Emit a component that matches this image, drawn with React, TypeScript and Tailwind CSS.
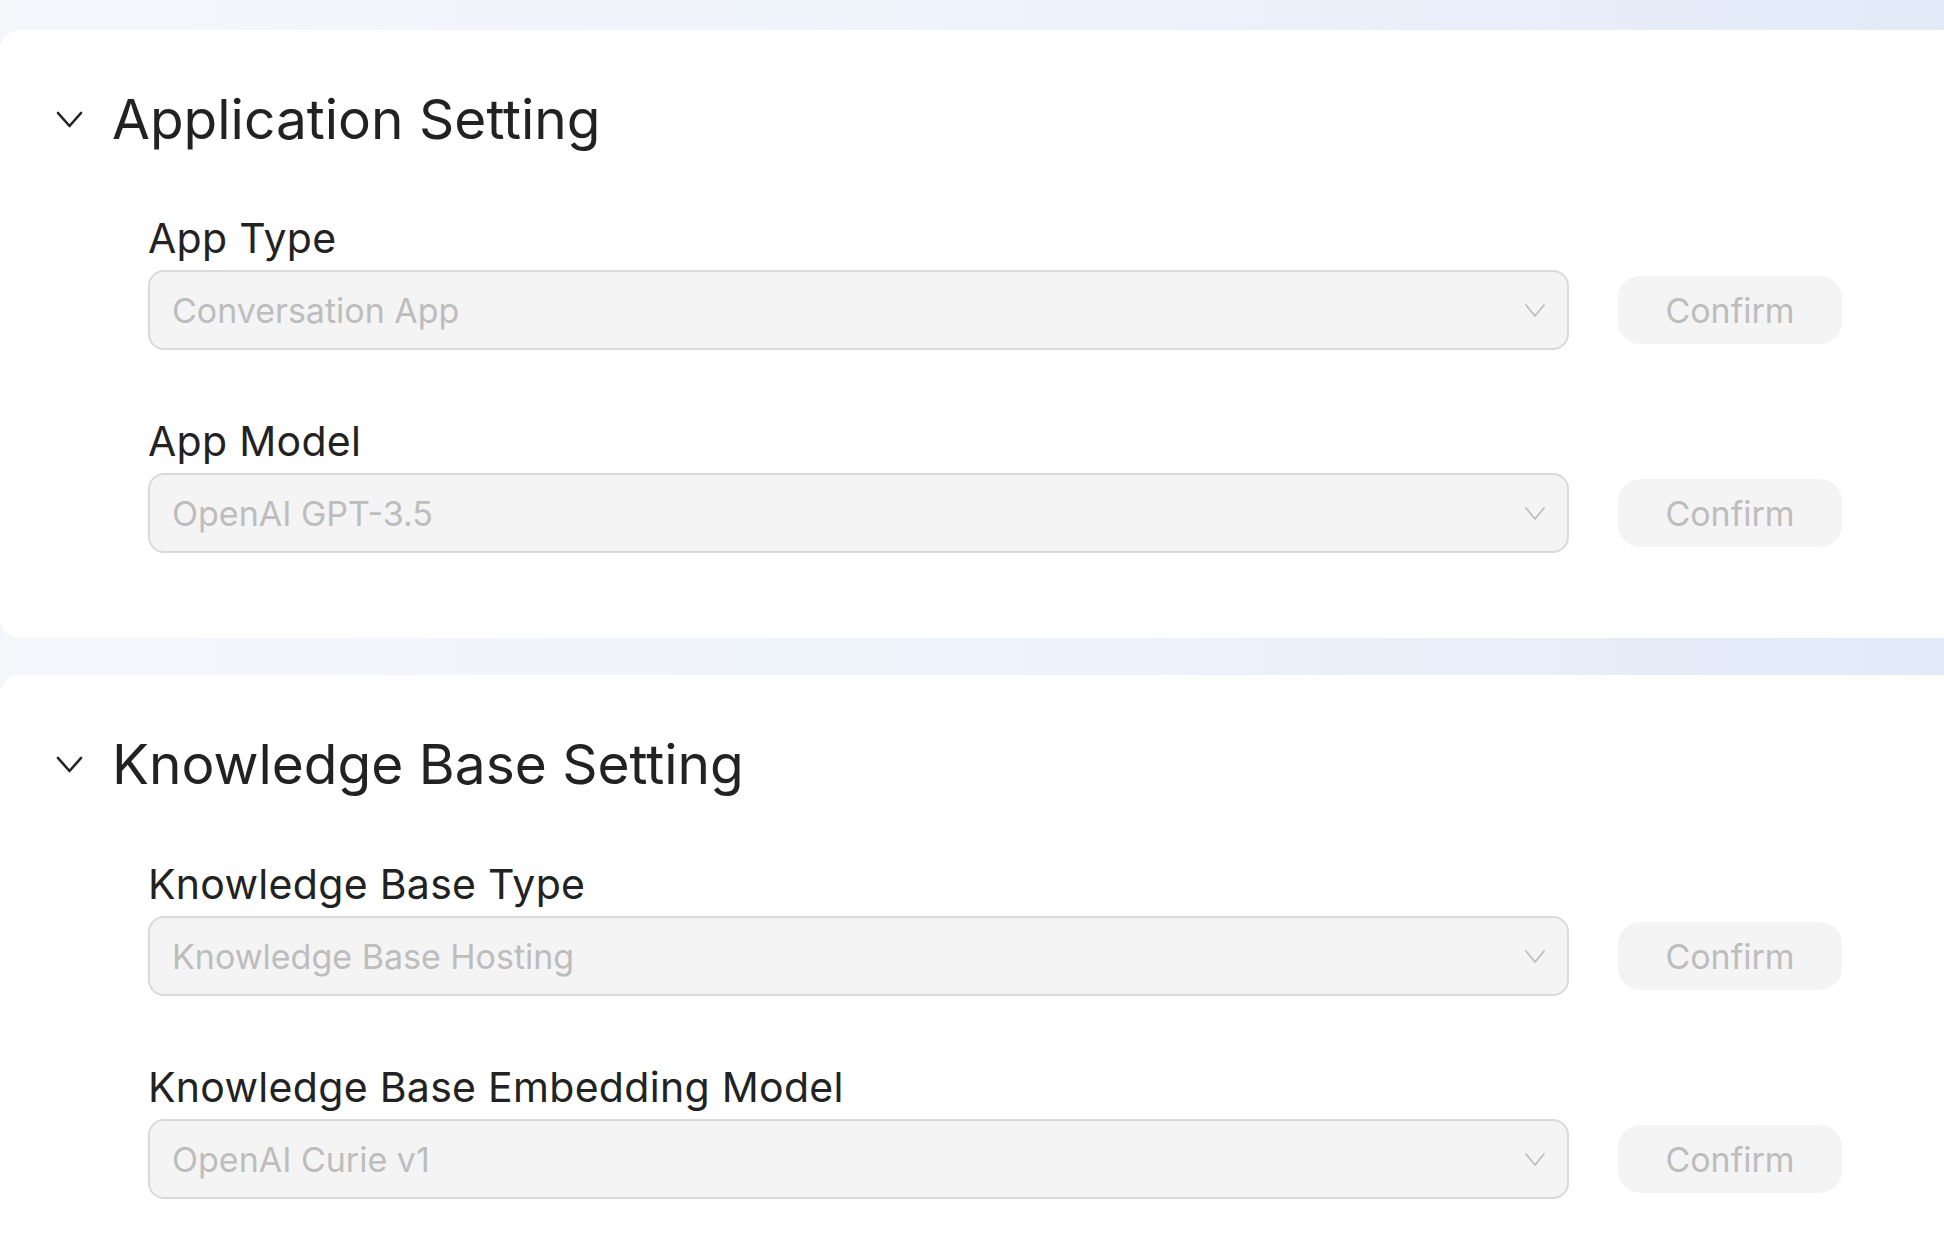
import React from "react";

const font = { fontFamily: "Inter, 'Open Sans', sans-serif" };

function Chevron({ className }: { className?: string }) {
  return (
    <svg viewBox="0 0 29 22" className={className} fill="none" stroke="currentColor" strokeWidth="2.6" strokeLinecap="round" strokeLinejoin="round">
      <path d="M3 5 L14.5 18 L26 5" />
    </svg>
  );
}

function SmallChevron() {
  return (
    <svg viewBox="0 0 22 15" className="w-[22px] h-[15px] text-[#bdbdbd]" fill="none" stroke="currentColor" strokeWidth="1.7" strokeLinecap="round" strokeLinejoin="round">
      <path d="M2 2 L11 13 L20 2" />
    </svg>
  );
}

function Row({ label, value }: { label: string; value: string }) {
  return (
    <div className="flex flex-col">
      <div className="h-[46px] leading-[46px] text-[41px] tracking-[0.3px] text-[#222222] whitespace-nowrap">{label}</div>
      <div className="mt-[9px] flex items-center">
        <div className="w-[1421px] h-[80px] rounded-[16px] border-2 border-[#d9d9d9] bg-[#f4f4f4] flex items-center justify-between pl-[22px] pr-[21px]">
          <span className="text-[34px] text-[#bdbdbd] whitespace-nowrap">{value}</span>
          <SmallChevron />
        </div>
        <button className="ml-[49px] w-[224px] h-[68px] rounded-[22px] bg-[#f4f4f4] text-[34px] text-[#bdbdbd]">Confirm</button>
      </div>
    </div>
  );
}

function Card({ title, rows, extra, gap }: { title: string; rows: { label: string; value: string }[]; extra?: string; gap: string }) {
  return (
    <div className={`bg-white rounded-l-[20px] pt-[57px] pb-[85px] ${extra ?? ""}`}>
      <div className="flex items-center h-[64px]">
        <Chevron className="ml-[55px] w-[29px] h-[22px] text-[#222222]" />
        <div className="ml-[28px] text-[55px] leading-[64px] text-[#222222] whitespace-nowrap">{title}</div>
      </div>
      <div className={`pl-[148px] ${gap} flex flex-col gap-[68px]`}>
        {rows.map((r) => (
          <Row key={r.label} label={r.label} value={r.value} />
        ))}
      </div>
    </div>
  );
}

export default function App() {
  return (
    <div
      style={font}
      className="w-[1944px] h-[1258px] overflow-hidden bg-gradient-to-r from-[#f5f6fa] via-[#eff3fb] to-[#e2eaf8] pt-[30px] flex flex-col gap-[37px]"
    >
      <Card
        title="Application Setting"
        gap="mt-[64px]"
        rows={[
          { label: "App Type", value: "Conversation App" },
          { label: "App Model", value: "OpenAI GPT-3.5" },
        ]}
      />
      <Card
        title="Knowledge Base Setting"
        extra="flex-1"
        gap="mt-[65px]"
        rows={[
          { label: "Knowledge Base Type", value: "Knowledge Base Hosting" },
          { label: "Knowledge Base Embedding Model", value: "OpenAI Curie v1" },
        ]}
      />
    </div>
  );
}
